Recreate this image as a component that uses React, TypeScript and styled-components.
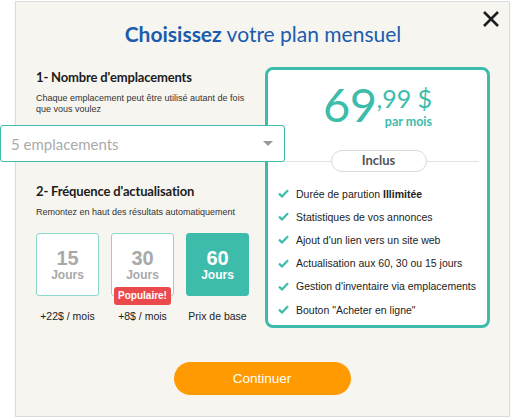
import React from "react";
import styled, { createGlobalStyle } from "styled-components";

const Global = createGlobalStyle`
  html, body { margin: 0; padding: 0; background: #ffffff; }
  * { box-sizing: border-box; }
`;

const TEAL = "#3dbcab";

const Modal = styled.div`
  position: relative;
  margin: 1px 0 0 15px;
  width: 495px;
  height: 416px;
  background: #f7f5f0;
  border: 1px solid #dcdcdc;
  box-shadow: 0 1px 1px rgba(0, 0, 0, 0.15);
  padding: 19px 19px 0 20px;
`;

const Close = styled.button`
  position: absolute;
  top: 7px;
  right: 9px;
  width: 19px;
  height: 19px;
  padding: 0;
  border: 0;
  background: transparent;
  display: flex;
  align-items: center;
  justify-content: center;
`;

const Title = styled.h1`
  margin: 0;
  font-family: Lato, sans-serif;
  font-weight: 400;
  font-size: 21px;
  line-height: 26px;
  color: #1b5cad;
  text-align: center;
  b { font-weight: 700; }
`;

const Main = styled.div`
  margin-top: 20px;
  display: grid;
  grid-template-columns: 229px 225px;
`;

const LeftCol = styled.div`
  position: relative;
  z-index: 1;
  display: flex;
  flex-direction: column;
`;

const Heading = styled.h2<{ $mt: number }>`
  margin: ${(p) => p.$mt}px 0 0;
  font-family: Lato, sans-serif;
  font-weight: 700;
  font-size: 13px;
  letter-spacing: -0.15px;
  line-height: 17px;
  color: #1c1c1c;
`;

const Sub = styled.p<{ $mt: number }>`
  margin: ${(p) => p.$mt}px 0 0;
  max-width: 218px;
  font-family: "Liberation Sans", Arial, sans-serif;
  font-size: 9px;
  line-height: 11px;
  color: #333;
`;

const Select = styled.div`
  margin: 10px 0 0 -36px;
  width: 285px;
  height: 37px;
  background: #fff;
  border: 1.5px solid ${TEAL};
  border-radius: 3px;
  display: flex;
  align-items: center;
  justify-content: space-between;
  padding: 0 11px 0 10px;
  font-family: Lato, sans-serif;
  font-size: 15px;
  color: #ababab;
`;

const Arrow = styled.span`
  width: 0;
  height: 0;
  border-left: 5px solid transparent;
  border-right: 5px solid transparent;
  border-top: 5px solid #9a9a9a;
`;

const Options = styled.div`
  margin-top: 15px;
  display: grid;
  grid-template-columns: repeat(3, 63px);
  column-gap: 12px;
`;

const Option = styled.div`
  display: flex;
  flex-direction: column;
  align-items: center;
`;

const DayBox = styled.div<{ $active?: boolean }>`
  position: relative;
  width: 63px;
  height: 63px;
  border-radius: 3px;
  border: 1.5px solid ${(p) => (p.$active ? TEAL : "#8ad7cc")};
  background: ${(p) => (p.$active ? TEAL : "#fff")};
  color: ${(p) => (p.$active ? "#fff" : "#a9a9a9")};
  display: flex;
  flex-direction: column;
  align-items: center;
  justify-content: center;
  font-family: "Liberation Sans", Arial, sans-serif;
  font-weight: 700;
`;

const DayNum = styled.span`
  font-size: 20px;
  line-height: 20px;
`;

const DayUnit = styled.span`
  font-size: 12px;
  line-height: 14px;
`;

const Badge = styled.span`
  position: absolute;
  left: 2px;
  right: 2px;
  bottom: -10px;
  height: 18px;
  border-radius: 3px;
  background: #ea4a4c;
  color: #fff;
  font-family: "Liberation Sans", Arial, sans-serif;
  font-weight: 700;
  font-size: 10px;
  line-height: 18px;
  text-align: center;
`;

const OptLabel = styled.span`
  margin-top: 14px;
  font-family: "Liberation Sans", Arial, sans-serif;
  font-size: 10.5px;
  line-height: 13px;
  color: #222;
  white-space: nowrap;
`;

const Card = styled.div`
  height: 261px;
  background: #fff;
  border: 3px solid ${TEAL};
  border-radius: 8px;
  padding: 11px 0 0;
  display: flex;
  flex-direction: column;
`;

const Price = styled.div`
  display: flex;
  align-items: flex-start;
  justify-content: center;
  padding-left: 0;
  color: ${TEAL};
  font-family: Lato, sans-serif;
`;

const Big = styled.span`
  font-size: 47px;
  line-height: 47px;
  font-weight: 400;
  letter-spacing: -0.5px;
`;

const Cents = styled.div`
  display: flex;
  flex-direction: column;
  align-items: flex-end;
  margin-top: 5px;
`;

const CentsVal = styled.span`
  font-size: 25px;
  line-height: 24px;
  font-weight: 400;
`;

const PerMonth = styled.span`
  margin-top: 5px;
  font-size: 12.5px;
  line-height: 13px;
  font-weight: 700;
`;

const Divider = styled.div`
  margin: 22px 8px 0 15px;
  height: 22px;
  display: flex;
  align-items: center;
  justify-content: center;
  background: linear-gradient(#e2e2e2, #e2e2e2) center / 100% 1px no-repeat;
`;

const Pill = styled.span`
  width: 96px;
  height: 22px;
  margin-right: 5px;
  border: 1.5px solid #dadada;
  border-radius: 11px;
  background: #fff;
  font-family: Lato, sans-serif;
  font-weight: 700;
  font-size: 13px;
  line-height: 19px;
  color: #555;
  text-align: center;
`;

const List = styled.ul`
  list-style: none;
  margin: 10px 0 0;
  padding: 0 0 0 10px;
`;

const Item = styled.li`
  height: 23.2px;
  display: flex;
  align-items: center;
  gap: 7px;
  font-family: "Liberation Sans", Arial, sans-serif;
  font-size: 10.5px;
  color: #222;
  b { font-weight: 700; }
`;

const Footer = styled.div`
  margin-top: 34px;
  display: flex;
  justify-content: center;
  padding-right: 2px;
`;

const Continue = styled.button`
  width: 177px;
  height: 33px;
  border: 0;
  border-radius: 17px;
  background: #ff9a00;
  color: #fff;
  font-family: "Liberation Sans", Arial, sans-serif;
  font-size: 13.5px;
  cursor: pointer;
`;

const Check = () => (
  <svg width="11" height="9" viewBox="0 0 11 9">
    <path d="M1 4.6 L4 7.4 L10 1.2" fill="none" stroke={TEAL} strokeWidth="2.2" />
  </svg>
);

const features: React.ReactNode[] = [
  <>Durée de parution <b>Illimitée</b></>,
  "Statistiques de vos annonces",
  "Ajout d'un lien vers un site web",
  "Actualisation aux 60, 30 ou 15 jours",
  "Gestion d'inventaire via emplacements",
  'Bouton "Acheter en ligne"',
];

const options = [
  { n: "15", label: "+22$ / mois" },
  { n: "30", label: "+8$ / mois", popular: true },
  { n: "60", label: "Prix de base", active: true },
];

export default function App() {
  return (
    <>
      <Global />
      <Modal>
        <Close aria-label="Fermer">
          <svg width="18" height="18" viewBox="0 0 18 18">
            <path d="M2 2 L16 16 M16 2 L2 16" stroke="#1e1e1e" strokeWidth="2.6" />
          </svg>
        </Close>
        <Title>
          <b>Choisissez</b> votre plan mensuel
        </Title>
        <Main>
          <LeftCol>
            <Heading $mt={2}>1- Nombre d'emplacements</Heading>
            <Sub $mt={7}>Chaque emplacement peut être utilisé autant de fois que vous voulez</Sub>
            <Select>
              <span>5 emplacements</span>
              <Arrow />
            </Select>
            <Heading $mt={21}>2- Fréquence d'actualisation</Heading>
            <Sub $mt={7}>Remontez en haut des résultats automatiquement</Sub>
            <Options>
              {options.map((o) => (
                <Option key={o.n}>
                  <DayBox $active={o.active}>
                    <DayNum>{o.n}</DayNum>
                    <DayUnit>Jours</DayUnit>
                    {o.popular && <Badge>Populaire!</Badge>}
                  </DayBox>
                  <OptLabel>{o.label}</OptLabel>
                </Option>
              ))}
            </Options>
          </LeftCol>
          <Card>
            <Price>
              <Big>69</Big>
              <Cents>
                <CentsVal>,99 $</CentsVal>
                <PerMonth>par mois</PerMonth>
              </Cents>
            </Price>
            <Divider>
              <Pill>Inclus</Pill>
            </Divider>
            <List>
              {features.map((f, i) => (
                <Item key={i}>
                  <Check />
                  <span>{f}</span>
                </Item>
              ))}
            </List>
          </Card>
        </Main>
        <Footer>
          <Continue>Continuer</Continue>
        </Footer>
      </Modal>
    </>
  );
}
